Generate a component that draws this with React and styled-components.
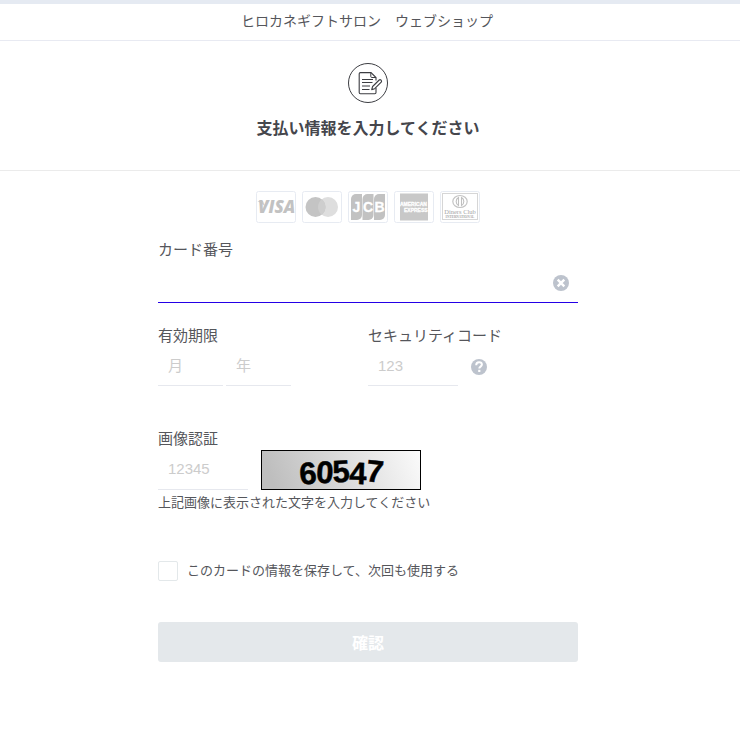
import React, { useState } from 'react'
import styled, { createGlobalStyle } from 'styled-components'

const GlobalStyle = createGlobalStyle`
  * {
    box-sizing: border-box;
  }

  body {
    margin: 0;
    background-color: #ffffff;
    color: #55565b;
    font-family: 'Liberation Sans', 'Noto Sans CJK JP', sans-serif;
    font-size: 15px;
  }
`

const Page = styled.div`
  border-top: 4px solid #e5eaf2;
`

const ShopHeader = styled.header`
  padding: 7px 6px 9px 0;
  border-bottom: 1px solid #e8eaf2;
  font-size: 14px;
  line-height: 20px;
  text-align: center;
`

const Heading = styled.section`
  display: flex;
  flex-direction: column;
  align-items: center;
  gap: 14px;
  padding: 22px 4px 29px 0;
  border-bottom: 1px solid #ebebeb;
`

const StepIcon = styled.svg`
  display: block;
  width: 40px;
  height: 40px;
`

const Title = styled.h1`
  margin: 0;
  font-size: 16px;
  font-weight: 700;
  line-height: 24px;
  color: #45464c;
`

const Main = styled.main`
  padding: 20px 4px 40px 0;
`

const Form = styled.form`
  width: 100%;
  max-width: 420px;
  margin: 0 auto;
`

const Brands = styled.div`
  display: flex;
  justify-content: center;
  gap: 6px;
  margin-bottom: 16px;
`

const BrandCard = styled.svg`
  display: block;
  width: 40px;
  height: 32px;
`

const FieldRow = styled.div`
  display: grid;
  grid-template-columns: 1fr 1fr;
  margin: 22px 0 42px;
`

const FieldSet = styled.fieldset`
  min-width: 0;
  margin: 0;
  padding: 0;
  border: 0;
`

const Label = styled.label`
  display: block;
  padding: 0;
  line-height: 22px;
`

const InputLine = styled.div`
  position: relative;
  display: flex;
  align-items: center;
  gap: ${(props) => props.$gap || '0'};
`

const Input = styled.input`
  width: ${(props) => props.$width || '100%'};
  height: ${(props) => (props.$active ? '42px' : '39px')};
  padding: 0 10px 2px;
  border: 0;
  border-bottom: 1px solid ${(props) => (props.$active ? '#2400e6' : '#e6e8ee')};
  border-radius: 0;
  outline: none;
  background: transparent;
  color: inherit;
  font-family: inherit;
  font-size: 15px;

  &::placeholder {
    color: #cccccc;
    opacity: 1;
  }
`

const IconButton = styled.button`
  display: block;
  width: 16px;
  height: 16px;
  padding: 0;
  border: 0;
  background: none;
  cursor: pointer;

  svg {
    display: block;
  }
`

const ClearButton = styled(IconButton)`
  position: absolute;
  right: 9px;
  bottom: 12px;
`

const Captcha = styled.svg`
  display: block;
  width: 160px;
  height: 40px;
`

const Hint = styled.p`
  margin: 3px 0 48px;
  font-size: 13px;
  line-height: 20px;
`

const CheckLabel = styled.label`
  display: flex;
  align-items: center;
  gap: 9px;
  margin-bottom: 41px;
  font-size: 13px;
  line-height: 20px;
`

const Checkbox = styled.input`
  appearance: none;
  width: 20px;
  height: 20px;
  margin: 0;
  border: 1px solid #e3e8ea;
  border-radius: 2px;
  background-color: #ffffff;

  &:checked {
    background-color: #bcc3cf;
  }
`

const SubmitButton = styled.button`
  display: block;
  width: 100%;
  height: 40px;
  border: 0;
  border-radius: 3px;
  background-color: #e4e8eb;
  color: #ffffff;
  font-family: inherit;
  font-size: 16px;
  font-weight: 700;
`

const PaperPen = () => (
  <StepIcon viewBox="0 0 40 40" fill="none" stroke="#3c3d42" aria-hidden="true">
    <circle cx="20" cy="20" r="19.5" />
    <path
      d="M28 25V29.5a1.2 1.2 0 0 1-1.2 1.2H12.4a1.2 1.2 0 0 1-1.2-1.2V10.8a1.2 1.2 0 0 1 1.2-1.2H23l5 5v3"
      strokeWidth="1.1"
    />
    <path d="M22.8 9.8v3.7a1 1 0 0 0 1 1H28" strokeWidth="1" />
    <path d="M14 16.5h11M14 19.5h10.5M14 23h8M14 26.5h7.5" strokeWidth="1" />
    <path
      d="M23.7 26.6l.9-3.1 6.6-6.5a1.2 1.2 0 0 1 1.7 0l.3.4a1.2 1.2 0 0 1 0 1.7l-6.5 6.6z"
      fill="#ffffff"
      strokeWidth="1.1"
      strokeLinejoin="round"
    />
  </StepIcon>
)

const Frame = () => (
  <rect x="0.5" y="0.5" width="39" height="31" rx="2" fill="#ffffff" stroke="#e7ebf2" />
)

const Visa = () => (
  <BrandCard viewBox="0 0 40 32" role="img" aria-label="VISA">
    <Frame />
    <path d="M1.5 10h5.5l2 5z" fill="#d0d0d0" />
    <text
      x="2"
      y="22"
      fontFamily="Open Sans, sans-serif"
      fontSize="17"
      fontWeight="800"
      fontStyle="italic"
      fill="#c2c2c2"
    >
      VISA
    </text>
  </BrandCard>
)

const Mastercard = () => (
  <BrandCard viewBox="0 0 40 32" role="img" aria-label="Mastercard">
    <Frame />
    <circle cx="26" cy="16" r="10" fill="#dedede" />
    <circle cx="13.5" cy="16" r="10" fill="#c4c4c4" />
    <path d="M19.75 8.2a10 10 0 0 1 0 15.6a10 10 0 0 1 0-15.6z" fill="#cecece" />
  </BrandCard>
)

const Jcb = () => (
  <BrandCard viewBox="0 0 40 32" role="img" aria-label="JCB">
    <Frame />
    {[3, 14.5, 26].map((x) => (
      <path
        key={x}
        d={`M${x + 5} 3h6v21a5 5 0 0 1-5 5h-6v-21a5 5 0 0 1 5-5z`}
        fill="#c2c2c2"
      />
    ))}
    <g
      textAnchor="middle"
      fontFamily="Liberation Sans, sans-serif"
      fontSize="14"
      fontWeight="700"
      fill="#ffffff"
      stroke="#ffffff"
      strokeWidth="0.3"
    >
      <text x="8.5" y="21">J</text>
      <text x="20" y="21">C</text>
      <text x="31.5" y="21">B</text>
    </g>
  </BrandCard>
)

const Amex = () => (
  <BrandCard viewBox="0 0 40 32" role="img" aria-label="American Express">
    <Frame />
    <rect x="6" y="2.5" width="28" height="27" fill="#c8c8c8" />
    <g
      fontFamily="Liberation Sans, sans-serif"
      fontSize="5"
      fontWeight="700"
      fill="#ffffff"
      stroke="#ffffff"
      strokeWidth="0.3"
    >
      <text x="6" y="15">AMERICAN</text>
      <text x="10" y="21">EXPRESS</text>
    </g>
  </BrandCard>
)

const Diners = () => (
  <BrandCard viewBox="0 0 40 32" role="img" aria-label="Diners Club">
    <Frame />
    <rect x="2.5" y="2.5" width="35" height="26" fill="none" stroke="#d6d6d6" />
    <ellipse cx="20" cy="10.5" rx="7.2" ry="6" fill="#ffffff" stroke="#c4c4c4" strokeWidth="1.2" />
    <path d="M18.5 6.5a4.6 4.6 0 0 0 0 8zM21.5 6.5a4.6 4.6 0 0 1 0 8z" fill="#ffffff" stroke="#c0c0c0" strokeWidth="1.1" />
    <g textAnchor="middle" fill="#a6a6a6" fontFamily="Liberation Serif, serif">
      <text x="20" y="22.5" fontSize="6.5">Diners Club</text>
      <text x="20" y="27" fontSize="3.4" fontWeight="700">INTERNATIONAL</text>
    </g>
  </BrandCard>
)

const digits = [
  { char: '6', x: 47, y: 34, turn: -5 },
  { char: '0', x: 64, y: 33, turn: 3 },
  { char: '5', x: 80, y: 32, turn: -3 },
  { char: '4', x: 97, y: 34, turn: 2 },
  { char: '7', x: 114, y: 32, turn: 6 },
]

export default function App() {
  const [form, setForm] = useState({
    cardNumber: '',
    month: '',
    year: '',
    cvc: '',
    captcha: '',
    save: false,
  })

  const handleChange = (e) => {
    const { name, type, value, checked } = e.target
    setForm({ ...form, [name]: type === 'checkbox' ? checked : value })
  }

  const isFormValid =
    form.cardNumber && form.month && form.year && form.cvc && form.captcha

  return (
    <Page>
      <GlobalStyle />
      <ShopHeader>ヒロカネギフトサロン　ウェブショップ</ShopHeader>

      <Heading>
        <PaperPen />
        <Title>支払い情報を入力してください</Title>
      </Heading>

      <Main>
        <Form onSubmit={(e) => e.preventDefault()}>
          <Brands>
            <Visa />
            <Mastercard />
            <Jcb />
            <Amex />
            <Diners />
          </Brands>

          <Label htmlFor="cardNumber">カード番号</Label>
          <InputLine>
            <Input
              $active
              id="cardNumber"
              name="cardNumber"
              inputMode="numeric"
              value={form.cardNumber}
              onChange={handleChange}
            />
            <ClearButton
              type="button"
              aria-label="クリア"
              onClick={() => setForm({ ...form, cardNumber: '' })}
            >
              <svg width="16" height="16" viewBox="0 0 16 16">
                <circle cx="8" cy="8" r="8" fill="#bdc3cd" />
                <path d="M4.7 4.7l6.6 6.6M11.3 4.7l-6.6 6.6" stroke="#ffffff" strokeWidth="2.4" />
              </svg>
            </ClearButton>
          </InputLine>

          <FieldRow>
            <FieldSet>
              <Label as="legend">有効期限</Label>
              <InputLine $gap="3px">
                <Input
                  $width="65px"
                  name="month"
                  placeholder="月"
                  aria-label="月"
                  value={form.month}
                  onChange={handleChange}
                />
                <Input
                  $width="65px"
                  name="year"
                  placeholder="年"
                  aria-label="年"
                  value={form.year}
                  onChange={handleChange}
                />
              </InputLine>
            </FieldSet>
            <div>
              <Label htmlFor="cvc">セキュリティコード</Label>
              <InputLine $gap="13px">
                <Input
                  $width="90px"
                  id="cvc"
                  name="cvc"
                  placeholder="123"
                  value={form.cvc}
                  onChange={handleChange}
                />
                <IconButton type="button" aria-label="ヘルプ">
                  <svg width="16" height="16" viewBox="0 0 16 16">
                    <circle cx="8" cy="8" r="8" fill="#bdc3cd" />
                    <path
                      d="M5.2 6.2c0-1.9 1.2-3 2.9-3s2.8 1 2.8 2.4c0 2-2.6 2-2.6 3.9"
                      fill="none"
                      stroke="#ffffff"
                      strokeWidth="2"
                    />
                    <rect x="7.2" y="10.8" width="2.2" height="2.2" fill="#ffffff" />
                  </svg>
                </IconButton>
              </InputLine>
            </div>
          </FieldRow>

          <Label htmlFor="captcha">画像認証</Label>
          <InputLine $gap="13px">
            <Input
              $width="90px"
              id="captcha"
              name="captcha"
              placeholder="12345"
              value={form.captcha}
              onChange={handleChange}
            />
            <Captcha viewBox="0 0 160 40" role="img" aria-label="画像認証">
              <defs>
                <linearGradient id="captchaBg" x1="0" y1="0.1" x2="1" y2="0">
                  <stop offset="0" stopColor="#bebebe" />
                  <stop offset="1" stopColor="#fbfbfb" />
                </linearGradient>
              </defs>
              <rect x="0.5" y="0.5" width="159" height="39" fill="url(#captchaBg)" stroke="#000000" />
              <g
                textAnchor="middle"
                fontFamily="Liberation Sans, sans-serif"
                fontSize="31"
                fontWeight="700"
                stroke="#000000"
                strokeWidth="0.5"
              >
                {digits.map(({ char, x, y, turn }) => (
                  <text key={char} x={x} y={y} transform={`rotate(${turn} ${x} ${y - 11})`}>
                    {char}
                  </text>
                ))}
              </g>
            </Captcha>
          </InputLine>
          <Hint>上記画像に表示された文字を入力してください</Hint>

          <CheckLabel>
            <Checkbox
              type="checkbox"
              name="save"
              checked={form.save}
              onChange={handleChange}
            />
            このカードの情報を保存して、次回も使用する
          </CheckLabel>

          <SubmitButton type="submit" disabled={!isFormValid}>
            確認
          </SubmitButton>
        </Form>
      </Main>
    </Page>
  )
}
